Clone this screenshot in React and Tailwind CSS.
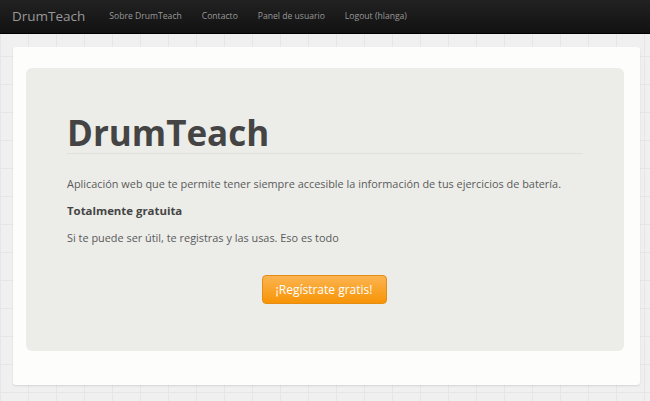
export default function App() {
  return (
    <div
      className="w-[650px] h-[401px] overflow-hidden bg-[#f0f0f0] bg-[linear-gradient(#e6e6e6_1px,transparent_1px),linear-gradient(90deg,#e6e6e6_1px,transparent_1px)] bg-[size:28px_28px]"
      style={{ fontFamily: '"Open Sans", sans-serif' }}
    >
      <nav className="h-[34px] flex items-center bg-[linear-gradient(#222222,#111111)] border-b border-[#000]">
        <span className="ml-[12px] text-[13.5px] text-[#999999] leading-none">DrumTeach</span>
        <div className="flex ml-[24px] gap-[20px] text-[8.6px] text-[#999999] leading-none">
          <span>Sobre DrumTeach</span>
          <span>Contacto</span>
          <span>Panel de usuario</span>
          <span>Logout (hlanga)</span>
        </div>
      </nav>
      <div className="ml-[13px] mt-[13px] w-[627px] h-[338px] bg-[#fdfdfb] rounded-[3px] shadow-[0_1px_2px_rgba(0,0,0,0.12)] pt-[21px] pl-[13px]">
        <div className="w-[598px] h-[283px] bg-[#ecede9] rounded-[6px] pt-[45px] px-[41px]">
          <h1 className="text-[35px] leading-[40px] font-bold text-[#444444] border-b border-[#e0e1dc]">
            DrumTeach
          </h1>
          <p className="mt-[21px] text-[10.9px] leading-[18px] text-[#5a5a5a]">
            Aplicación web que te permite tener siempre accesible la información de tus ejercicios de batería.
          </p>
          <p className="mt-[9px] text-[11.4px] leading-[18px] text-[#444444] font-bold">Totalmente gratuita</p>
          <p className="mt-[9px] text-[10.9px] leading-[18px] text-[#5a5a5a]">
            Si te puede ser útil, te registras y las usas. Eso es todo
          </p>
          <div className="flex justify-center mt-[28px]">
            <button className="w-[125px] h-[29px] rounded-[4px] bg-[linear-gradient(#fbb450,#f89406)] border border-[#e38d13] text-white text-[12px] ml-[-2px]">
              ¡Regístrate gratis!
            </button>
          </div>
        </div>
      </div>
    </div>
  );
}
